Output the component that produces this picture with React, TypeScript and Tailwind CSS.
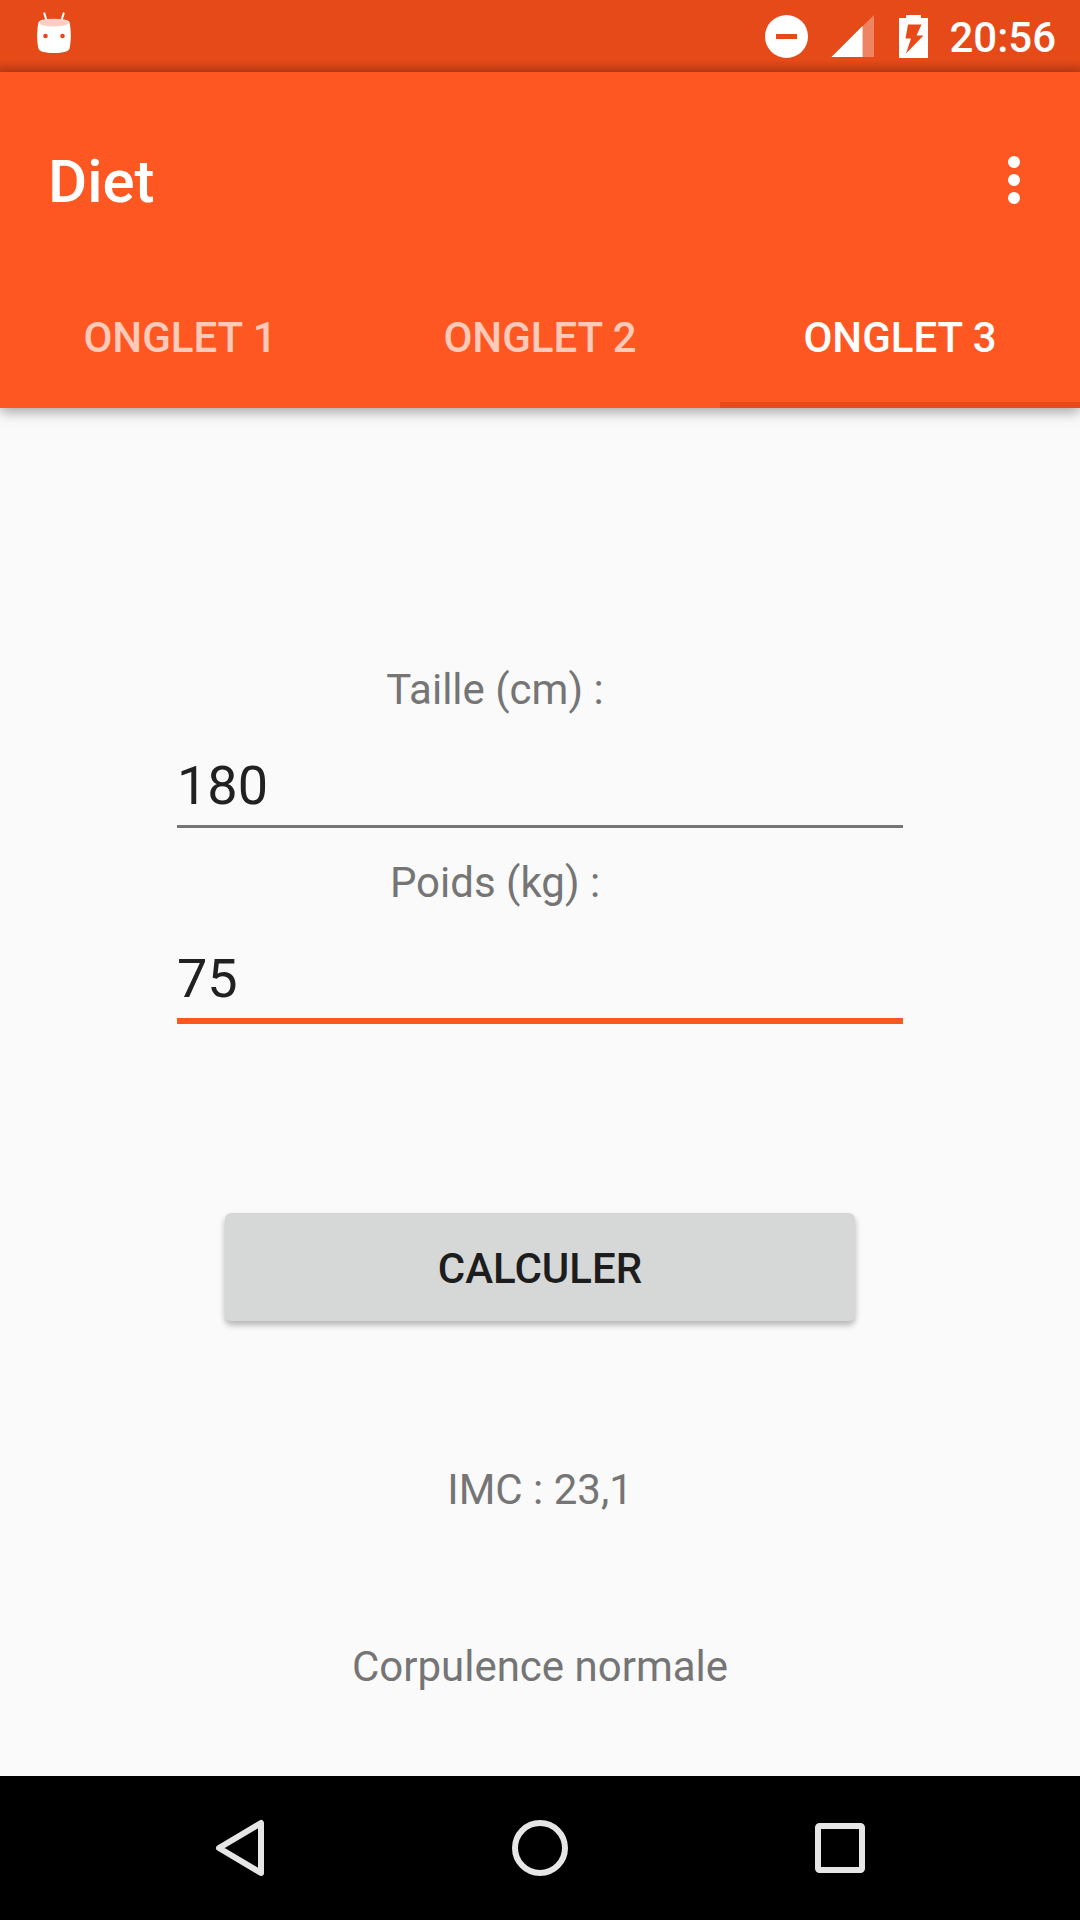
import { useState } from 'react';

type FieldName = 'taille' | 'poids';

const tabs = ['Onglet 1', 'Onglet 2', 'Onglet 3'];

function AndroidHeadIcon() {
  return (
    <svg className="h-[72px] w-[72px]" viewBox="18 0 72 72" aria-hidden="true">
      <path d="M44.3 13.4 47 22M63.7 13.4 61 22" stroke="#fff" strokeWidth="2" strokeLinecap="round" />
      <path
        d="M38.5 22.5C38.5 20 45 19 54 19s15.500 1 15.500 3.500C71 28 71.500 41 69.500 48.500C68.800 51.500 63 53 54 53s-14.800-1.500-15.500-4.500C36.500 41 37 28 38.500 22.500Z"
        fill="#fff"
      />
      <ellipse cx="54" cy="22.700" rx="14.500" ry="3.900" fill="#f9cfc3" />
      <circle cx="45.500" cy="36" r="2.300" fill="#e64a19" />
      <circle cx="62.500" cy="36" r="2.300" fill="#e64a19" />
    </svg>
  );
}

function DoNotDisturbIcon() {
  return (
    <svg className="h-[44px] w-[44px]" viewBox="0 0 44 44" aria-hidden="true">
      <circle cx="21.500" cy="21.500" r="21.500" fill="#fff" />
      <rect x="11" y="19" width="21" height="5" fill="#e64a19" />
    </svg>
  );
}

function SignalIcon() {
  return (
    <svg className="h-[44px] w-[44px]" viewBox="0 0 44 44" aria-hidden="true">
      <path d="M43 0V42H0.500Z" fill="#fff" fillOpacity="0.32" />
      <path d="M31.500 11V42H0.500Z" fill="#fff" />
    </svg>
  );
}

function BatteryIcon() {
  return (
    <svg className="h-[44px] w-[30px]" viewBox="0 0 30 44" aria-hidden="true">
      <path d="M7 -1H22V3H29V43H0V3H7Z" fill="#fff" />
      <path d="M9 9.500H22.500L17.500 20.500H24.500L7 38.500L12 23.500H6.500Z" fill="#e64a19" />
    </svg>
  );
}

function StatusBar() {
  return (
    <div className="relative flex h-[72px] items-center bg-[#e64a19] pr-6 pl-[18px] text-white">
      <AndroidHeadIcon />
      <div className="ml-auto flex items-center pt-0.5">
        <DoNotDisturbIcon />
        <div className="ml-[22px]">
          <SignalIcon />
        </div>
        <div className="mr-5 ml-6">
          <BatteryIcon />
        </div>
        <time className="pt-0.5 text-[42px] leading-[50px] font-medium">20:56</time>
      </div>
      <div className="absolute inset-x-0 bottom-0 h-3 bg-linear-to-b from-black/0 to-black/15" />
    </div>
  );
}

interface FieldProps {
  id: FieldName;
  label: string;
  value: string;
  active: boolean;
  onChange: (value: string) => void;
  onFocus: () => void;
}

function Field({ id, label, value, active, onChange, onFocus }: FieldProps) {
  return (
    <div className="flex flex-col">
      <label htmlFor={id} className="pr-[90px] text-center text-[42px] leading-[50px] text-[#757575]">
        {label}
      </label>
      <input
        id={id}
        type="text"
        inputMode="numeric"
        value={value}
        onChange={(e) => onChange(e.target.value)}
        onFocus={onFocus}
        className="mt-[39px] h-16 w-full bg-transparent text-[54px] leading-[64px] text-[#212121] outline-none"
      />
      <div className="mt-[7px] h-[6px]">
        <div className={active ? 'h-[6px] bg-[#ff5722]' : 'h-[3px] bg-[#757575]'} />
      </div>
    </div>
  );
}

function describe(imc: number) {
  if (imc < 18.5) return 'Maigreur';
  if (imc < 25) return 'Corpulence normale';
  if (imc < 30) return 'Surpoids';
  return 'Obésité';
}

export default function App() {
  const [taille, setTaille] = useState('180');
  const [poids, setPoids] = useState('75');
  const [active, setActive] = useState<FieldName>('poids');
  const [tab, setTab] = useState(2);
  const [imc, setImc] = useState(75 / 1.8 ** 2);

  const calculer = () => {
    const metres = Number(taille) / 100;
    const result = Number(poids) / (metres * metres);
    if (Number.isFinite(result)) setImc(result);
  };

  return (
    <div className="flex min-h-screen flex-col bg-[#fafafa] font-[Roboto,sans-serif]">
      <StatusBar />
      <header className="relative bg-[#ff5722] pt-6 text-white shadow-[0_4px_12px_rgba(0,0,0,0.35)]">
        <div className="flex h-[168px] items-center justify-between pr-[30px] pl-12">
          <h1 className="pt-1 text-[60px] leading-[72px] font-medium">Diet</h1>
          <button type="button" aria-label="Plus d’options" className="flex h-[72px] w-[72px] items-center justify-center">
            <svg className="h-12 w-3" viewBox="0 0 12 48" fill="#fff" aria-hidden="true">
              <circle cx="6" cy="6" r="6" />
              <circle cx="6" cy="24" r="6" />
              <circle cx="6" cy="42" r="6" />
            </svg>
          </button>
        </div>
        <nav role="tablist" className="grid h-[144px] grid-cols-3">
          {tabs.map((name, i) => (
            <button
              key={name}
              type="button"
              role="tab"
              aria-selected={i === tab}
              onClick={() => setTab(i)}
              className={
                i === tab
                  ? 'border-y-6 border-t-transparent border-b-[#e64a19] pt-1 text-[42px] leading-[50px] font-medium text-white uppercase'
                  : 'border-y-6 border-transparent pt-1 text-[42px] leading-[50px] font-medium text-white/70 uppercase'
              }
            >
              {name}
            </button>
          ))}
        </nav>
      </header>
      <main className="flex flex-1 flex-col items-center pt-[257px] pb-20">
        <div className="flex w-[726px] max-w-full flex-col gap-[27px]">
          <Field
            id="taille"
            label="Taille (cm) :"
            value={taille}
            active={active === 'taille'}
            onChange={setTaille}
            onFocus={() => setActive('taille')}
          />
          <Field
            id="poids"
            label="Poids (kg) :"
            value={poids}
            active={active === 'poids'}
            onChange={setPoids}
            onFocus={() => setActive('poids')}
          />
        </div>
        <button
          type="button"
          onClick={calculer}
          className="mt-[189px] h-[108px] w-[630px] max-w-full rounded-md bg-[#d6d8d7] pt-1 text-[42px] leading-[50px] font-medium text-[#1d1d1d] uppercase shadow-[0_4px_6px_rgba(0,0,0,0.28)]"
        >
          Calculer
        </button>
        <output className="mt-36 text-[42px] leading-[50px] text-[#757575]">IMC : {imc.toFixed(1).replace('.', ',')}</output>
        <p className="mt-[127px] text-[42px] leading-[50px] text-[#757575]">{describe(imc)}</p>
      </main>
      <footer className="flex h-36 items-center justify-center gap-[156px] bg-black">
        <button type="button" aria-label="Retour" className="flex h-36 w-36 items-center justify-center">
          <svg className="h-[72px] w-[72px]" viewBox="0 0 72 72" fill="none" stroke="#e6e6e6" strokeWidth="6" strokeLinejoin="round" aria-hidden="true">
            <path d="M15 36 57 11V61Z" />
          </svg>
        </button>
        <button type="button" aria-label="Accueil" className="flex h-36 w-36 items-center justify-center">
          <svg className="h-[72px] w-[72px]" viewBox="0 0 72 72" fill="none" stroke="#e6e6e6" strokeWidth="6" aria-hidden="true">
            <circle cx="36" cy="36" r="25" />
          </svg>
        </button>
        <button type="button" aria-label="Applications récentes" className="flex h-36 w-36 items-center justify-center">
          <svg className="h-[72px] w-[72px]" viewBox="0 0 72 72" fill="none" stroke="#e6e6e6" strokeWidth="6" aria-hidden="true">
            <rect x="14" y="14" width="44" height="44" rx="1.500" />
          </svg>
        </button>
      </footer>
    </div>
  );
}
